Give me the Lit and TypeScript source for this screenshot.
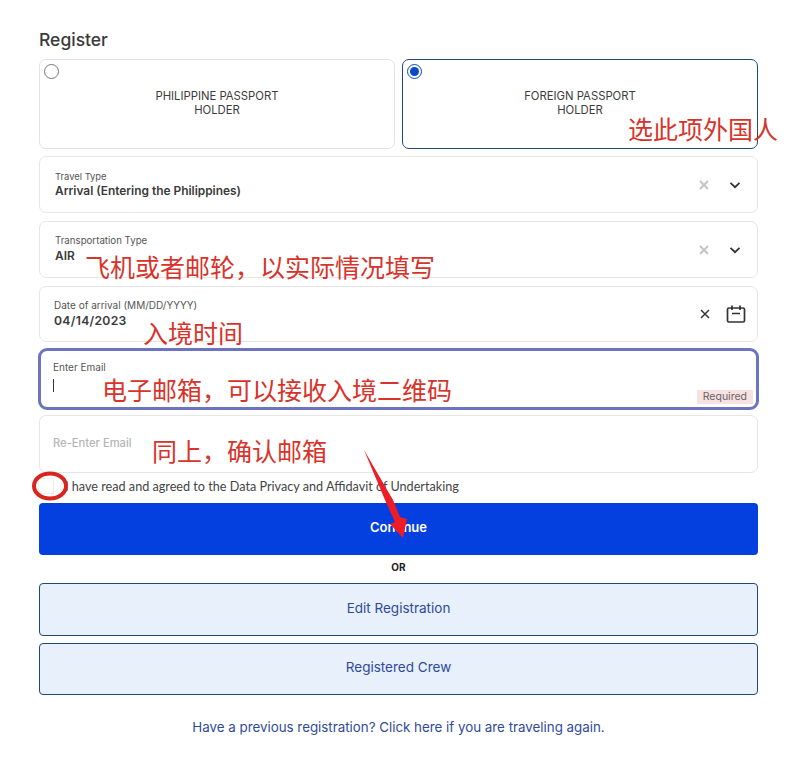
import { LitElement, html, css } from "lit";
import { customElement } from "lit/decorators.js";

const chevron = html`<svg class="ico" width="16" height="16" viewBox="0 0 16 16"><path d="M3.5 5.8 8 10.2l4.5-4.4" fill="none" stroke="#333" stroke-width="1.8"/></svg>`;
const clearX = (c: string, w: number) => html`<svg class="ico" width="16" height="16" viewBox="0 0 16 16"><path d="M4 4l8 8M12 4l-8 8" fill="none" stroke=${c} stroke-width=${w}/></svg>`;
const calendar = html`<svg class="ico" width="22" height="22" viewBox="0 0 22 22" fill="none" stroke="#333" stroke-width="1.7"><rect x="2.5" y="5" width="17" height="14" rx="1.5"/><path d="M7 2.5v4.5M15 2.5v4.5M7 10.5h8"/></svg>`;

@customElement("app-root")
export class AppRoot extends LitElement {
  static styles = css`
    :host { display: block; position: relative; width: 811px; height: 760px; overflow: hidden; background: #fff; font-family: "Inter", "Noto Sans CJK SC", sans-serif; color: #333; }
    .page { display: flex; flex-direction: column; padding: 28px 53px 0 39px; }
    h1 { margin: 0 0 7px; font-size: 17.5px; line-height: 24px; font-weight: 500; color: #3a3a3a; }
    .radios { display: grid; grid-template-columns: 356px 356px; gap: 7px; }
    .radio { position: relative; box-sizing: border-box; height: 90px; border: 1px solid #e3e3e3; border-radius: 7px; display: flex; align-items: center; justify-content: center; text-align: center; font-size: 11.3px; line-height: 14px; color: #3c3c3c; padding-bottom: 2px; }
    .radio.on { border-color: #1d4a78; }
    .dot { position: absolute; left: 4px; top: 4px; box-sizing: border-box; width: 15px; height: 15px; border-radius: 50%; border: 1px solid #777; background: #fff; }
    .on .dot { border-color: #0b48c8; }
    .on .dot::after { content: ""; position: absolute; inset: 2px; border-radius: 50%; background: #0b48c8; }
    .field { position: relative; box-sizing: border-box; border: 1px solid #e6e6e6; border-radius: 7px; display: flex; align-items: center; padding: 0 14px 0 15px; background: #fff; }
    .f1 { height: 57px; margin-top: 7px; }
    .f2 { height: 57px; margin-top: 8px; }
    .f3 { height: 56px; margin-top: 8px; padding-left: 14px; }
    .email { height: 62px; margin: 6px -1px 0; border: 3px solid #6b74bd; border-radius: 9px; padding: 0 14px 6px 12px; }
    .re { height: 58px; margin-top: 5px; padding: 0 14px 3px 13px; font-size: 11.2px; color: #b5b5b5; font-weight: 500; }
    .grow { flex: 1; display: flex; flex-direction: column; min-width: 0; }
    .lab { font-size: 10px; line-height: 13px; color: #555; }
    .f1 .lab { font-size: 9.4px; }
    .f2 .lab { font-size: 9.7px; }
    .f2 .grow, .f3 .grow { margin-top: -1px; }
    .f2 .val, .f3 .val { margin-top: 1px; }
    .val { font-size: 11.9px; line-height: 16px; font-weight: 600; color: #3a3a3a; }
    .date { font-size: 12.2px; letter-spacing: .3px; }
    .caret { width: 1px; height: 13px; background: #333; margin-top: 5px; }
    .icons { display: flex; align-items: center; gap: 15px; }
    .icons.cal { gap: 12px; margin-right: -4px; }
    .ico { display: block; }
    .req { position: absolute; right: 3px; bottom: 3px; background: #f8e1e1; color: #666; font-size: 10.5px; line-height: 14px; padding: 0 6px; }
    .agree { display: flex; align-items: center; height: 28px; font-family: "Lato", sans-serif; font-size: 12.65px; color: #444; margin-bottom: 2px; padding-bottom: 2px; box-sizing: border-box; }
    .box { box-sizing: border-box; width: 16px; height: 16px; border: 1px solid #ececec; border-radius: 2px; margin: 0 0 0 -1px; }
    .agree span { margin-left: 11px; }
    .cont { box-sizing: border-box; height: 52px; border-radius: 4px; background: #0440e0; color: #fff; font-size: 13px; font-weight: 600; display: flex; align-items: center; justify-content: center; padding-bottom: 4px; }
    .or { height: 28px; display: flex; align-items: center; justify-content: center; font-size: 10px; font-weight: 700; color: #222; padding-bottom: 4px; box-sizing: border-box; }
    .alt { box-sizing: border-box; height: 53px; border: 1px solid #1d4a78; border-radius: 4px; background: #e8f0fc; color: #2f4a9c; font-size: 13.5px; display: flex; align-items: center; justify-content: center; padding-bottom: 4px; }
    .alt + .alt { margin-top: 7px; height: 52px; }
    .link { margin-top: 22px; text-align: center; font-size: 13.33px; line-height: 20px; color: #2f4a9c; }
    .note { position: absolute; white-space: nowrap; font-family: "Noto Sans CJK SC", sans-serif; font-size: 25px; line-height: 30px; color: #d8332b; }
    .mark { position: absolute; left: 0; top: 0; pointer-events: none; }
  `;

  render() {
    return html`
      <div class="page">
        <h1>Register</h1>
        <div class="radios">
          <div class="radio"><i class="dot"></i><div>PHILIPPINE PASSPORT<br />HOLDER</div></div>
          <div class="radio on"><i class="dot"></i><div>FOREIGN PASSPORT<br />HOLDER</div></div>
        </div>
        <div class="field f1">
          <div class="grow"><div class="lab">Travel Type</div><div class="val">Arrival (Entering the Philippines)</div></div>
          <div class="icons">${clearX("#c4c4c4", 2)}${chevron}</div>
        </div>
        <div class="field f2">
          <div class="grow"><div class="lab">Transportation Type</div><div class="val">AIR</div></div>
          <div class="icons">${clearX("#c4c4c4", 2)}${chevron}</div>
        </div>
        <div class="field f3">
          <div class="grow"><div class="lab">Date of arrival (MM/DD/YYYY)</div><div class="val date">04/14/2023</div></div>
          <div class="icons cal">${clearX("#333", 1.5)}${calendar}</div>
        </div>
        <div class="field email">
          <div class="grow"><div class="lab">Enter Email</div><div class="caret"></div></div>
          <div class="req">Required</div>
        </div>
        <div class="field re">Re-Enter Email</div>
        <div class="agree"><div class="box"></div><span>I have read and agreed to the Data Privacy and Affidavit of Undertaking</span></div>
        <div class="cont">Continue</div>
        <div class="or">OR</div>
        <div class="alt">Edit Registration</div>
        <div class="alt">Registered Crew</div>
        <div class="link">Have a previous registration? Click here if you are traveling again.</div>
      </div>
      <div class="note" style="left:628px;top:113px">选此项外国人</div>
      <div class="note" style="left:85px;top:251px">飞机或者邮轮，以实际情况填写</div>
      <div class="note" style="left:143px;top:317px">入境时间</div>
      <div class="note" style="left:102px;top:374px">电子邮箱，可以接收入境二维码</div>
      <div class="note" style="left:152px;top:435px">同上，确认邮箱</div>
      <svg class="mark" width="811" height="760" viewBox="0 0 811 760">
        <ellipse cx="50" cy="486" rx="16" ry="12.5" fill="none" stroke="#d8261e" stroke-width="4"/>
        <path d="M364 450 393 500 400 517 407 519 403 538 390 524 395 522 385 500Z" fill="#ee1c25"/>
      </svg>
    `;
  }
}
